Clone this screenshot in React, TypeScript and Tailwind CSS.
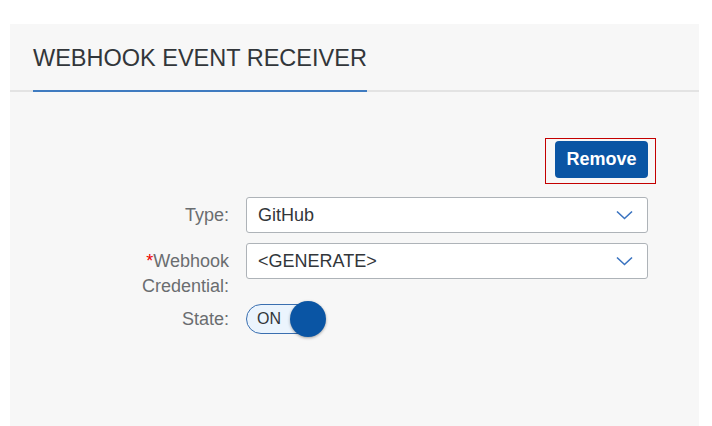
import React from "react";

const Chevron = () => (
  <svg width="17" height="10" viewBox="0 0 17 10" fill="none">
    <path d="M1 1.5 L8.5 8.5 L16 1.5" stroke="#3a73c0" strokeWidth="1.6" />
  </svg>
);

const Select = ({ value }: { value: string }) => (
  <div className="h-[36px] flex items-center justify-between bg-white border border-[#aeb3b8] rounded-[3px] pl-[11px] pr-[14px]">
    <span className="text-[18px] text-[#32363a]">{value}</span>
    <Chevron />
  </div>
);

const App: React.FC = () => {
  return (
    <div
      className="bg-white h-[426px] pt-[24px] pl-[10px] pr-[13px]"
      style={{ fontFamily: '"Liberation Sans", Arial, sans-serif' }}
    >
      <div className="bg-[#f7f7f7] h-full">
        {/* header */}
        <div className="h-[68px] flex items-end px-[23px] border-b-2 border-[#e3e3e3]">
          <div className="h-full flex items-center border-b-2 border-[#3f7bc0] -mb-[2px] pt-[2px]">
            <h1 className="text-[23.5px] font-normal text-[#32363a] leading-none">
              WEBHOOK EVENT RECEIVER
            </h1>
          </div>
        </div>

        {/* body */}
        <div className="pt-[46px]">
          <div className="flex justify-end mr-[43px]">
            <div className="border border-[#c40000] pt-[2px] pl-[9px] pr-[7px] pb-[5px]">
              <button className="h-[37px] w-[93px] bg-[#0a55a4] rounded-[4px] text-white font-bold text-[18px]">
                Remove
              </button>
            </div>
          </div>

          <div className="ml-[119px] mt-[13px] w-[519px] flex flex-col">
            <div className="flex gap-[17px]">
              <div className="w-[100px] shrink-0 text-right text-[18px] text-[#6a6d70] leading-[36px]">
                Type:
              </div>
              <div className="flex-1">
                <Select value="GitHub" />
              </div>
            </div>

            <div className="flex gap-[17px] mt-[10px]">
              <div className="w-[100px] shrink-0 text-right text-[18px] text-[#6a6d70] leading-[25px] pt-[6px]">
                <span className="text-[#e00]">*</span>Webhook Credential:
              </div>
              <div className="flex-1">
                <Select value="<GENERATE>" />
              </div>
            </div>

            <div className="flex gap-[17px] mt-[2px]">
              <div className="w-[100px] shrink-0 text-right text-[18px] text-[#6a6d70] leading-[36px]">
                State:
              </div>
              <div className="flex items-center h-[36px]">
                <div className="flex items-center h-[30px] w-[74px] rounded-full border border-[#3a6fb0] bg-[#ebf4fd] pl-[10px]">
                  <span className="text-[16px] text-[#32363a]">ON</span>
                </div>
                <div className="w-[36px] h-[36px] rounded-full bg-[#0a55a4] -ml-[30px] shadow-[0_1px_3px_rgba(0,0,0,0.35)]" />
              </div>
            </div>
          </div>
        </div>
      </div>
    </div>
  );
};

export default App;
